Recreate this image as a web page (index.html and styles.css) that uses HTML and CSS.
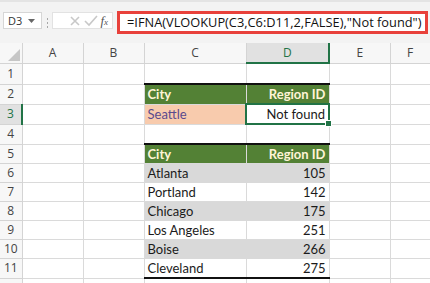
FILE: index.html
```html
<!DOCTYPE html>
<html lang="en">
<head>
    <meta charset="UTF-8">
    <title>IFNA lookup</title>
    <link rel="stylesheet" href="styles.css">
</head>
<body>
    <div class="formula-bar">
        <div class="name-box">
            <span>D3</span>
            <svg class="caret" width="7" height="4" viewBox="0 0 7 4"><path d="M0 0h7L3.5 4z" fill="#666"/></svg>
        </div>
        <div class="grip"><i></i><i></i><i></i></div>
        <div class="func-box">
            <svg width="13" height="12" viewBox="0 0 13 12"><path d="M2 2l8 8M10 2l-8 8" stroke="#c8c8c8" stroke-width="1.6"/></svg>
            <svg width="14" height="12" viewBox="0 0 14 12"><path d="M1 6l4 4 8-9" stroke="#c8c8c8" stroke-width="1.6" fill="none"/></svg>
            <span class="fx">f<sub>x</sub></span>
        </div>
        <div class="formula">=IFNA(VLOOKUP(C3,C6:D11,2,FALSE),"Not found")</div>
    </div>

    <table class="sheet">
        <colgroup>
            <col class="c-row"><col class="c-a"><col class="c-b"><col class="c-c"><col class="c-d"><col class="c-e"><col class="c-f">
        </colgroup>
        <tr class="col-heads">
            <th class="corner"><svg width="12" height="12" viewBox="0 0 12 12"><path d="M12 0v12H0z" fill="#c6c6c6"/></svg></th>
            <th>A</th><th>B</th><th>C</th><th class="sel">D</th><th>E</th><th>F</th>
        </tr>
        <tr class="first"><th>1</th><td></td><td></td><td></td><td></td><td></td><td></td></tr>
        <tr><th>2</th><td></td><td></td><td class="head">City</td><td class="head num">Region ID</td><td></td><td></td></tr>
        <tr><th class="sel">3</th><td></td><td></td><td class="lookup">Seattle</td><td class="num active">Not found<span class="handle"></span></td><td></td><td></td></tr>
        <tr><th>4</th><td></td><td></td><td></td><td></td><td></td><td></td></tr>
        <tr><th>5</th><td></td><td></td><td class="head">City</td><td class="head num">Region ID</td><td></td><td></td></tr>
        <tr class="band"><th>6</th><td></td><td></td><td>Atlanta</td><td class="num">105</td><td></td><td></td></tr>
        <tr><th>7</th><td></td><td></td><td>Portland</td><td class="num">142</td><td></td><td></td></tr>
        <tr class="band"><th>8</th><td></td><td></td><td>Chicago</td><td class="num">175</td><td></td><td></td></tr>
        <tr><th>9</th><td></td><td></td><td>Los Angeles</td><td class="num">251</td><td></td><td></td></tr>
        <tr class="band"><th>10</th><td></td><td></td><td>Boise</td><td class="num">266</td><td></td><td></td></tr>
        <tr class="last"><th>11</th><td></td><td></td><td>Cleveland</td><td class="num">275</td><td></td><td></td></tr>
        <tr><th></th><td></td><td></td><td></td><td></td><td></td><td></td></tr>
    </table>
</body>
</html>
```

FILE: styles.css
```css
body {
    margin: 0;
    width: 430px;
    height: 283px;
    overflow: hidden;
    background: #fff;
    font-family: 'Lato', 'Liberation Sans', sans-serif;
}

.formula-bar {
    height: 43px;
    box-sizing: border-box;
    padding: 9px 2px 0 3px;
    display: flex;
    align-items: flex-start;
    background: #f3f3f3;
    border-top: 2px solid #e4e4e4;
}

.name-box {
    width: 39px;
    height: 17px;
    margin-top: 1px;
    box-sizing: border-box;
    background: #fff;
    border: 1px solid #d6d6d6;
    display: flex;
    align-items: center;
    justify-content: space-between;
    padding: 0 6px 0 4px;
    font-family: 'Open Sans', sans-serif;
    font-size: 11px;
    color: #333;
}

.grip {
    width: 10px;
    display: flex;
    flex-direction: column;
    align-items: center;
    gap: 2px;
    padding-top: 7px;
}

.grip i {
    width: 1px;
    height: 2px;
    background: #a8a8a8;
}

.func-box {
    width: 61px;
    height: 17px;
    margin-top: 1px;
    box-sizing: border-box;
    background: #fff;
    border: 1px solid #e2e2e2;
    display: flex;
    align-items: center;
    justify-content: flex-end;
    gap: 2px;
    padding-right: 4px;
}

.fx {
    font-family: 'Liberation Serif', serif;
    font-style: italic;
    font-size: 13px;
    color: #555;
    line-height: 1;
}

.fx sub {
    font-size: 9px;
    vertical-align: 0;
}

.formula {
    flex: 1;
    height: 23px;
    margin-left: 4px;
    box-sizing: border-box;
    background: #fff;
    border: 3px solid #e8413b;
    padding-left: 7px;
    font-family: 'Open Sans', sans-serif;
    font-size: 12.8px;
    line-height: 17px;
    color: #111;
    white-space: nowrap;
}

.sheet {
    border-collapse: collapse;
    table-layout: fixed;
    width: 430px;
    font-size: 13px;
    color: #1b1b1b;
}

.c-row { width: 22px; }
.c-a, .c-b, .c-e { width: 61px; }
.c-c { width: 102px; }
.c-d { width: 83px; }
.c-f { width: 40px; }

.sheet td,
.sheet th {
    height: 18px;
    padding: 0 3px;
    border: 1px solid #dadada;
    white-space: nowrap;
    overflow: visible;
    line-height: 16px;
}

.sheet th {
    background: #f7f7f7;
    border-color: #d4d4d4;
    font-family: 'Open Sans', sans-serif;
    font-weight: normal;
    font-size: 12px;
    color: #444;
    padding: 0;
}

.col-heads th {
    height: 19px;
    border-top: 0;
}

.corner {
    text-align: right;
    vertical-align: bottom;
}

.corner svg {
    display: block;
    margin: 0 2px 2px auto;
}

.sheet tr th:first-child {
    border-left: 0;
}

.first td, .first th {
    height: 19px;
}

.col-heads th.sel {
    background: #e1e1e1;
    color: #217346;
    border-bottom: 2px solid #217346;
}

tr th.sel {
    background: #e1e1e1;
    color: #217346;
    border-right: 2px solid #217346;
}

.num {
    text-align: right;
}

.head {
    background: #538135;
    color: #fff4d6;
    font-weight: bold;
    border-top: 2px solid #111 !important;
    border-color: #538135;
}

.lookup {
    background: #f8cbad;
    color: #5b4a8e;
    border-color: #f8cbad;
}

.band td:nth-child(4),
.band td:nth-child(5) {
    background: #d9d9d9;
    border-color: #d9d9d9;
}

.last td:nth-child(4),
.last td:nth-child(5) {
    border-bottom: 2px solid #111;
}

.active {
    position: relative;
    border: 2px solid #217346 !important;
}

.handle {
    position: absolute;
    right: -4px;
    bottom: -4px;
    width: 5px;
    height: 5px;
    background: #217346;
    border: 1px solid #fff;
}
```
